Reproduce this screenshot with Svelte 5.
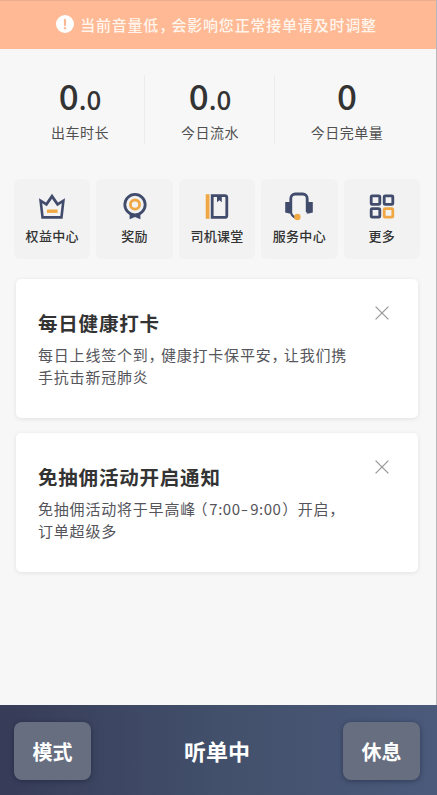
<script>
  const stats = [
    { whole: '0', fraction: '.0', label: '出车时长' },
    { whole: '0', fraction: '.0', label: '今日流水' },
    { whole: '0', fraction: '', label: '今日完单量' }
  ]

  const shortcuts = [
    { icon: 'crown', label: '权益中心' },
    { icon: 'medal', label: '奖励' },
    { icon: 'book', label: '司机课堂' },
    { icon: 'headset', label: '服务中心' },
    { icon: 'more', label: '更多' }
  ]

  let showHealth = true
  let showNotice = true
</script>

<div class="screen">
  <div class="alert">
    <svg width="18" height="18" viewBox="0 0 18 18">
      <circle cx="9" cy="9" r="9" fill="#fff" />
      <path d="M9 4.8v5.4" stroke="#ffb994" stroke-width="2.2" stroke-linecap="round" />
      <circle cx="9" cy="13.2" r="1.2" fill="#ffb994" />
    </svg>
    <span>当前音量低<i class="comma">，</i>会影响您正常接单请及时调整</span>
  </div>

  <div class="stats">
    {#each stats as stat}
      <div class="stat">
        <div class="value">{stat.whole}<small>{stat.fraction}</small></div>
        <div class="stat-label">{stat.label}</div>
      </div>
    {/each}
  </div>

  <div class="shortcuts">
    {#each shortcuts as item}
      <button class="shortcut">
        <svg width="30" height="30" viewBox="0 0 30 30" fill="none" stroke="#414b6b" stroke-width="2.8">
          {#if item.icon === 'crown'}
            <path d="M2 6.2l7 4.4L15 1.8l6 8.8 7-4.4-2.4 20.6H4.4z" stroke="none" fill="#414b6b" />
            <path d="M5.2 11.2l4.6 3L15 6.8l5.2 7.4 4.6-3-1.5 12.8H6.7z" stroke="none" fill="#f2f2f2" />
            <path d="M10 19.2h10.6" stroke="#efa844" stroke-width="3.4" />
          {:else if item.icon === 'medal'}
            <path d="M9.6 22v5.2l5.4-2.2 5.4 2.2V22z" stroke="none" fill="#414b6b" />
            <circle cx="15" cy="12.6" r="10.2" fill="#f2f2f2" />
            <circle cx="15" cy="12.6" r="4.6" stroke="#efa844" stroke-width="2.8" />
          {:else if item.icon === 'book'}
            <path d="M5.6 2.2v24.6" stroke="#efa844" stroke-width="3.8" />
            <path d="M10.2 3.6h12.6a2 2 0 0 1 2 2v17.8a2 2 0 0 1-2 2H10.2z" />
            <path d="M15 4v6.2l2.4-2 2.4 2V4z" stroke="none" fill="#414b6b" />
          {:else if item.icon === 'headset'}
            <path d="M6.8 20V6.5a4.5 4.5 0 0 1 4.5-4.5h7.4a4.5 4.5 0 0 1 4.5 4.5V20" />
            <path d="M6.8 19.4c.4 3.5 2 5.4 5 6.2" stroke-width="2.2" />
            <path d="M1.2 10h6.2v11.4H5.2l-4-1zM22.6 10h6.2v10.4l-4 1h-2.2z" stroke="none" fill="#414b6b" />
            <circle cx="13.4" cy="25" r="3.2" stroke="none" fill="#efa844" />
          {:else}
            <rect x="4.2" y="3.8" width="8.6" height="8.6" rx="1" />
            <rect x="17.2" y="3.8" width="8.6" height="8.6" rx="1" />
            <rect x="4.2" y="16.6" width="8.6" height="8.6" rx="1" />
            <rect x="17.2" y="16.6" width="8.6" height="8.6" rx="1" stroke="#efa844" />
          {/if}
        </svg>
        <span>{item.label}</span>
      </button>
    {/each}
  </div>

  <div class="cards">
    {#if showHealth}
      <div class="card">
        <h2>每日健康打卡</h2>
        <p>每日上线签个到<i class="comma">，</i>健康打卡保平安<i class="comma">，</i>让我们携<br />手抗击新冠肺炎</p>
        <button class="close" aria-label="关闭" on:click={() => (showHealth = false)}>
          <svg width="14" height="14" viewBox="0 0 14 14"><path d="M.6.6l12.8 12.8M13.4.6L.6 13.4" /></svg>
        </button>
      </div>
    {/if}
    {#if showNotice}
      <div class="card">
        <h2>免抽佣活动开启通知</h2>
        <p>免抽佣活动将于早高峰<i class="open">（</i><span class="time">7:00<b>-</b>9:00</span><i class="shut">）</i>开启<i class="comma">，</i><br />订单超级多</p>
        <button class="close" aria-label="关闭" on:click={() => (showNotice = false)}>
          <svg width="14" height="14" viewBox="0 0 14 14"><path d="M.6.6l12.8 12.8M13.4.6L.6 13.4" /></svg>
        </button>
      </div>
    {/if}
  </div>

  <div class="bottom">
    <button class="action">模式</button>
    <div class="status">听单中</div>
    <button class="action">休息</button>
  </div>
</div>

<style>
  .screen {
    display: flex;
    flex-direction: column;
    box-sizing: border-box;
    width: 437px;
    height: 795px;
    overflow: hidden;
    background: linear-gradient(#b8b8ba, #b8b8ba) right / 1px 100% no-repeat #f7f7f7;
    font-family: "Noto Sans CJK SC", sans-serif;
    color: #333;
  }

  button {
    padding: 0;
    border: none;
    font-family: inherit;
    color: inherit;
  }

  i {
    font-style: normal;
    font-feature-settings: "halt";
  }

  .comma {
    margin-right: 4px;
  }

  .alert {
    display: flex;
    align-items: center;
    justify-content: center;
    gap: 6px;
    flex: none;
    height: 49px;
    margin-right: 1px;
    background: #ffb994;
    border-top: 1px solid #e9ad90;
    box-sizing: border-box;
    padding: 0 3px 2px 0;
    color: #fff5ec;
    font-size: 15px;
    font-weight: 500;
    letter-spacing: 0.8px;
  }

  .stats {
    display: grid;
    grid-template-columns: repeat(3, 130px);
    height: 69px;
    flex: none;
    margin: 26px 0 0 15px;
  }

  .stat {
    display: flex;
    flex-direction: column;
    align-items: center;
    height: 69px;
  }

  .stat + .stat {
    box-shadow: -1px 0 #ececec;
  }

  .stat:last-child {
    width: 144px;
  }

  .value {
    height: 46px;
    line-height: 40px;
    font-size: 35px;
    font-weight: 500;
  }

  .value small {
    font-size: 26px;
  }

  .stat-label {
    line-height: 27px;
    font-size: 14px;
    letter-spacing: 0.5px;
    color: #505050;
  }

  .shortcuts {
    display: flex;
    flex: none;
    gap: 6px;
    margin: 35px 0 0 14px;
  }

  .shortcut {
    display: flex;
    flex-direction: column;
    align-items: center;
    width: 76.4px;
    height: 80px;
    padding-top: 13px;
    border-radius: 6px;
    background: #f2f2f2;
    font-size: 13px;
    font-weight: 500;
    letter-spacing: 0.3px;
    line-height: 30px;
  }

  .shortcut svg {
    flex: none;
    margin-bottom: -1px;
  }

  .cards {
    display: flex;
    flex-direction: column;
    gap: 15px;
    flex: 1;
    margin: 20px 19px 0 16px;
  }

  .card {
    position: relative;
    height: 139px;
    box-sizing: border-box;
    padding: 29px 22px;
    border-radius: 5px;
    background: #fff;
    box-shadow: 0 1px 5px rgba(0, 0, 0, 0.09);
  }

  h2 {
    margin: 0;
    font-size: 19.5px;
    line-height: 30px;
    font-weight: 700;
    letter-spacing: 0.8px;
  }

  p {
    margin: 6px 0 0;
    font-size: 15px;
    line-height: 21.5px;
    letter-spacing: 0.8px;
    color: #55555b;
    white-space: nowrap;
  }

  .open {
    margin-left: 4px;
  }

  .shut {
    margin-right: 7px;
  }

  .time {
    margin: 0 1px;
    letter-spacing: 0.5px;
  }

  .time b {
    display: inline-block;
    font-weight: 400;
    transform: scaleX(1.4);
    margin: 0 2px;
  }

  .close {
    position: absolute;
    top: 27px;
    right: 28px;
    width: 15px;
    height: 14px;
    background: none;
  }

  .close svg {
    display: block;
    stroke: #999;
    stroke-width: 1.3;
  }

  .bottom {
    display: flex;
    align-items: center;
    justify-content: space-between;
    flex: none;
    height: 90px;
    box-sizing: border-box;
    padding: 2px 17px 0 14px;
    background: linear-gradient(90deg, #373c58, #42506b 50%, #4b5a7b);
    color: #fff;
  }

  .action {
    width: 77px;
    height: 58px;
    border-radius: 8px;
    background: #666e80;
    box-shadow: 0 1px 5px rgba(20, 25, 50, 0.5);
    font-size: 20px;
    font-weight: 700;
  }

  .status {
    padding-bottom: 3px;
    font-size: 22px;
    font-weight: 700;
  }
</style>
